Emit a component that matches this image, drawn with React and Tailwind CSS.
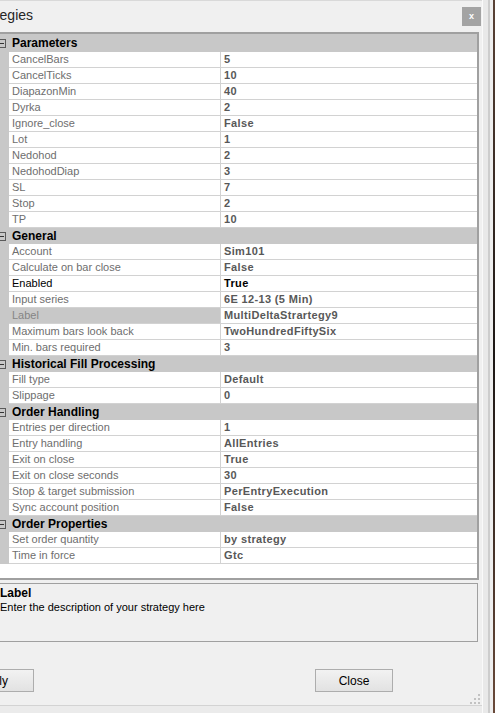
import React from 'react';

const SECTIONS = [
  {
    title: 'Parameters',
    rows: [
      ['CancelBars', '5'],
      ['CancelTicks', '10'],
      ['DiapazonMin', '40'],
      ['Dyrka', '2'],
      ['Ignore_close', 'False'],
      ['Lot', '1'],
      ['Nedohod', '2'],
      ['NedohodDiap', '3'],
      ['SL', '7'],
      ['Stop', '2'],
      ['TP', '10'],
    ],
  },
  {
    title: 'General',
    rows: [
      ['Account', 'Sim101'],
      ['Calculate on bar close', 'False'],
      ['Enabled', 'True', 'dark'],
      ['Input series', '6E 12-13 (5 Min)'],
      ['Label', 'MultiDeltaStrartegy9', 'selected'],
      ['Maximum bars look back', 'TwoHundredFiftySix'],
      ['Min. bars required', '3'],
    ],
  },
  {
    title: 'Historical Fill Processing',
    rows: [
      ['Fill type', 'Default'],
      ['Slippage', '0'],
    ],
  },
  {
    title: 'Order Handling',
    rows: [
      ['Entries per direction', '1'],
      ['Entry handling', 'AllEntries'],
      ['Exit on close', 'True'],
      ['Exit on close seconds', '30'],
      ['Stop & target submission', 'PerEntryExecution'],
      ['Sync account position', 'False'],
    ],
  },
  {
    title: 'Order Properties',
    rows: [
      ['Set order quantity', 'by strategy'],
      ['Time in force', 'Gtc'],
    ],
  },
];

function CategoryRow({ title, first }) {
  return (
    <div className={`flex items-center bg-[#c8c8c8] shrink-0 ${first ? 'h-[18px]' : 'h-[16px]'}`}>
      {/* collapse box, partly cut off at the left edge */}
      <span className="ml-[-3px] w-[9px] h-[9px] border border-[#5a5a5a] flex items-center justify-center shrink-0">
        <span className="w-[5px] h-px bg-[#333]"></span>
      </span>
      <span className="ml-[6px] text-[12px] font-bold text-black leading-none">{title}</span>
    </div>
  );
}

function PropertyRow({ name, value, kind }) {
  const dark = kind === 'dark';
  const selected = kind === 'selected';
  return (
    <div className="flex h-[16px] shrink-0">
      <div className="w-[9px] bg-[#c8c8c8] shrink-0"></div>
      <div
        className={`w-[211px] shrink-0 border-b border-[#d2d2d2] pl-[3px] text-[11px] leading-[15px] whitespace-nowrap ${
          selected ? 'bg-[#c8c8c8] text-[#858585]' : dark ? 'text-black' : 'text-[#6e6e6e]'
        }`}
      >
        {name}
      </div>
      <div
        className={`flex-1 border-l border-b border-[#d2d2d2] pl-[3px] text-[11px] font-bold tracking-[0.35px] leading-[15px] whitespace-nowrap ${
          dark ? 'text-black' : 'text-[#585858]'
        }`}
      >
        {value}
      </div>
    </div>
  );
}

export default function App() {
  return (
    <div className="w-[495px] h-[713px] flex overflow-hidden bg-[#f0f0f0] font-['Liberation_Sans',Arial,sans-serif]">
      <div className="w-[482px] h-full flex flex-col border-t border-[#d9d9d9] shrink-0">
        {/* caption */}
        <div className="h-[31px] flex items-start justify-between shrink-0">
          <span className="ml-[-30px] mt-[6px] text-[14px] leading-[17px] text-[#262626] whitespace-nowrap">
            Strategies
          </span>
          <button className="mt-[6px] mr-px w-[19px] h-[19px] bg-[#a3a3a3] text-white text-[9px] font-bold leading-none flex items-center justify-center">
            x
          </button>
        </div>

        {/* property grid */}
        <div className="w-[479px] h-[548px] shrink-0 bg-white border-t-2 border-r-2 border-b-2 border-[#a0a0a0] flex flex-col overflow-hidden">
          {SECTIONS.map((section, i) => (
            <React.Fragment key={section.title}>
              <CategoryRow title={section.title} first={i === 0} />
              {section.rows.map(([name, value, kind]) => (
                <PropertyRow key={name} name={name} value={value} kind={kind} />
              ))}
            </React.Fragment>
          ))}
        </div>

        {/* description panel */}
        <div className="mt-[3px] w-[478px] h-[59px] shrink-0 border-t border-r border-b border-[#a0a0a0] bg-[#f0f0f0] pt-[2px]">
          <div className="text-[12px] font-bold leading-[14px] text-black">Label</div>
          <div className="text-[11px] leading-[14px] text-black">Enter the description of your strategy here</div>
        </div>

        {/* buttons */}
        <div className="relative flex-1">
          <div className="mt-[27px] flex items-start">
            <button className="ml-[-48px] w-[82px] h-[23px] border border-[#adadad] bg-gradient-to-b from-[#f2f2f2] to-[#e2e2e2] text-[12px] text-black">
              Apply
            </button>
            <button className="ml-[281px] w-[78px] h-[23px] border border-[#adadad] bg-gradient-to-b from-[#f2f2f2] to-[#e2e2e2] text-[12px] text-black">
              Close
            </button>
          </div>
          <svg className="absolute right-[2px] bottom-[1px]" width="10" height="10" viewBox="0 0 10 10">
            <rect x="8" y="0" width="2" height="2" fill="#c2c2c2" />
            <rect x="4" y="4" width="2" height="2" fill="#c2c2c2" />
            <rect x="8" y="4" width="2" height="2" fill="#c2c2c2" />
            <rect x="0" y="8" width="2" height="2" fill="#c2c2c2" />
            <rect x="4" y="8" width="2" height="2" fill="#c2c2c2" />
            <rect x="8" y="8" width="2" height="2" fill="#c2c2c2" />
          </svg>
        </div>
        <div className="h-[8px] shrink-0 border-t border-[#d3d3d3] bg-[#ebebeb]"></div>
      </div>

      {/* window frame and desktop edge */}
      <div className="w-[6px] h-full bg-[#e9e9e9] border-l border-[#fafafa] shrink-0"></div>
      <div className="w-[2px] h-full bg-[#cdcdcd] shrink-0"></div>
      <div className="w-[3px] h-full bg-[#eeeeee] shrink-0"></div>
      <div className="w-[2px] h-full bg-gradient-to-b from-[#5a4236] via-[#1c1715] to-[#6a4a3a] shrink-0"></div>
    </div>
  );
}
